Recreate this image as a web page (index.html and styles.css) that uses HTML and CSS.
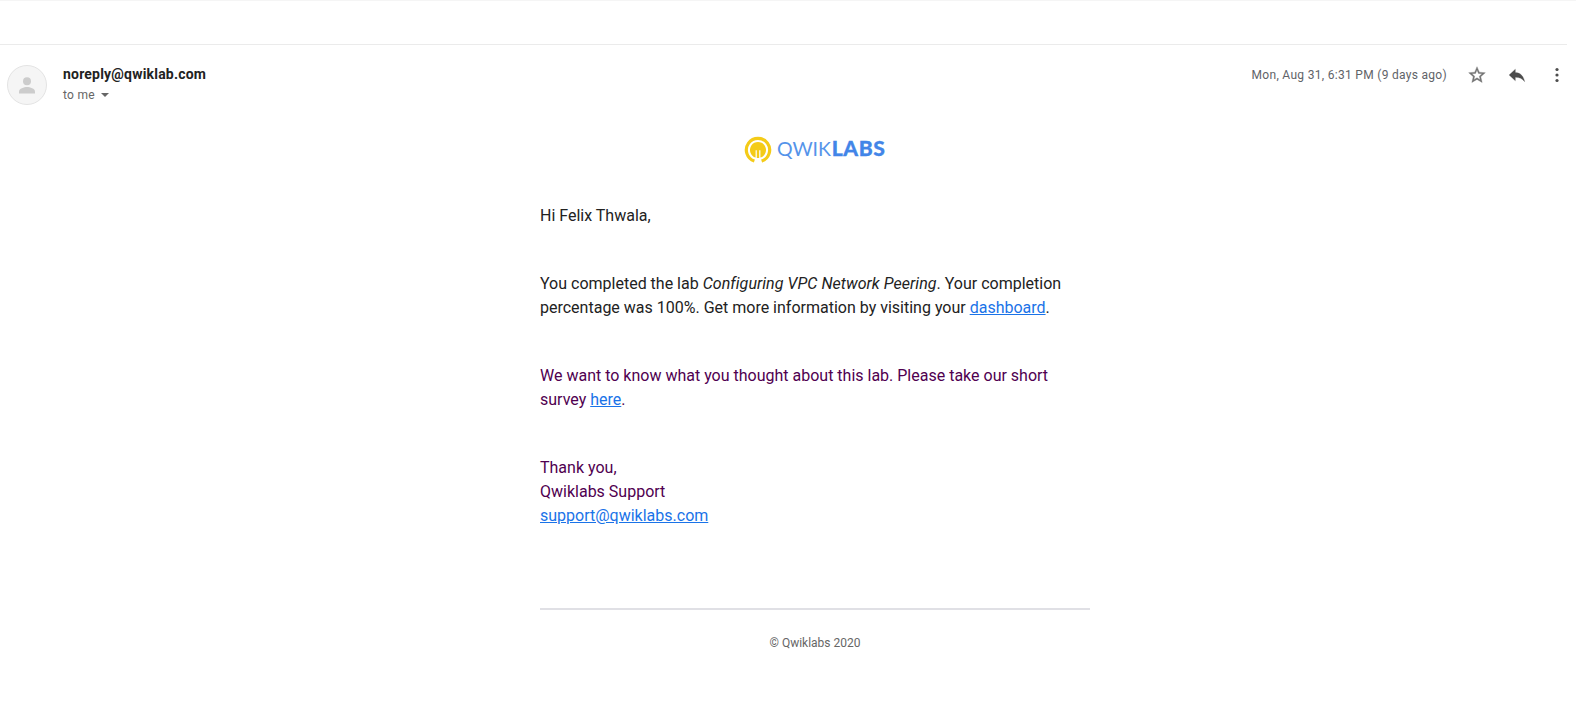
FILE: index.html
```html
<!DOCTYPE html>
<html lang="en">
<head>
<meta charset="utf-8">
<title>Qwiklabs message</title>
<link rel="stylesheet" href="styles.css">
</head>
<body>
<div class="toolbar"></div>
<header class="message-header">
  <div class="avatar">
    <svg width="40" height="40" viewBox="0 0 40 40"><circle cx="20" cy="20" r="19.5" fill="#f5f5f5" stroke="#e3e3e3"/><circle cx="20" cy="16.3" r="4" fill="#ccc"/><path d="M12 28.500v-2c0-3 5-4.600 8-4.600s8 1.600 8 4.600v2z" fill="#ccc"/></svg>
  </div>
  <div class="sender">
    <div class="sender-name">noreply@qwiklab.com</div>
    <div class="recipient"><span>to me</span><i class="caret"></i></div>
  </div>
  <div class="actions">
    <span class="date">Mon, Aug 31, 6:31 PM (9 days ago)</span>
    <svg class="icon star" viewBox="0 0 24 24"><path fill="#747474" stroke="#747474" stroke-width=".4" d="M22 9.240l-7.190-.620L12 2 9.190 8.630 2 9.240l5.460 4.730L5.820 21 12 17.270 18.180 21l-1.630-7.030L22 9.240zM12 15.400l-3.760 2.270 1-4.280-3.320-2.880 4.380-.380L12 6.100l1.710 4.040 4.380.380-3.320 2.880 1 4.280L12 15.400z"/></svg>
    <svg class="icon reply" viewBox="0 0 24 24"><path fill="#4d4d4d" stroke="#4d4d4d" stroke-width=".3" d="M10 9V5l-7.500 7 7.500 7v-4.300c5 0 8.400 1.700 11.200 5.300-1-5.200-4.200-11-11.200-11z"/></svg>
    <svg class="icon more" viewBox="0 0 20 20"><g fill="#4d4d4d"><circle cx="10" cy="4.500" r="1.600"/><circle cx="10" cy="10" r="1.600"/><circle cx="10" cy="15.500" r="1.600"/></g></svg>
  </div>
</header>
<main class="message">
  <svg class="logo" width="142" height="28" viewBox="0 0 142 28">
    <path d="M10.400 25.100A11.650 11.650 0 1 1 17.600 25.100" fill="none" stroke="#f4cb18" stroke-width="3.200"/>
    <path d="M11.600 21.600A8 8 0 1 1 16.400 21.600V14.300h-1.200V22h-2.400V14.300h-1.200z" fill="#f4cb18"/>
    <text class="logo-thin" x="33" y="20.200" textLength="54" lengthAdjust="spacingAndGlyphs">QWIK</text>
    <text class="logo-bold" x="87.800" y="20.200" textLength="53.500" lengthAdjust="spacingAndGlyphs">LABS</text>
  </svg>
  <p>Hi Felix Thwala,</p>
  <p>You completed the lab <em>Configuring VPC Network Peering</em>. Your completion<br>percentage was 100%. Get more information by visiting your <a>dashboard</a>.</p>
  <p class="quoted">We want to know what you thought about this lab. Please take our short<br>survey <a>here</a>.</p>
  <p class="quoted">Thank you,<br>Qwiklabs Support<br><a>support@qwiklabs.com</a></p>
  <footer class="copyright">© Qwiklabs 2020</footer>
</main>
</body>
</html>
```
FILE: styles.css
```css
* { box-sizing: border-box; }
body {
  margin: 0;
  height: 704px;
  overflow: hidden;
  background: #fff;
  color: #222;
  font-family: Roboto, "Liberation Sans", sans-serif;
}
.toolbar {
  height: 45px;
  margin-right: 9px;
  border-bottom: 1px solid #ebebeb;
  box-shadow: inset 0 1px #f5f5f5, 9px -44px 0 0 #f5f5f5;
  background: #fff;
}
.message-header {
  display: flex;
  height: 91px;
  padding: 20px 9px 0 7px;
}
.avatar { width: 40px; height: 40px; }
.sender { margin-left: 16px; }
.sender-name {
  height: 20px;
  font-size: 14px;
  font-weight: 700;
  line-height: 18px;
  letter-spacing: 0.2px;
}
.recipient {
  display: flex;
  align-items: center;
  font-size: 12px;
  line-height: 20px;
  letter-spacing: 0.3px;
  color: #666;
}
.caret {
  margin-left: 6px;
  border: 4px solid transparent;
  border-top-color: #666;
  border-bottom: 0;
}
.actions {
  display: flex;
  align-items: center;
  height: 20px;
  margin-left: auto;
}
.date {
  font-size: 12px;
  letter-spacing: 0.3px;
  color: #5f6368;
}
.icon { width: 20px; height: 20px; }
.star, .reply, .more { margin-left: 20px; }
.message {
  width: 550px;
  margin-left: 540px;
}
.logo {
  display: block;
  margin: 0 auto 40px;
}
.logo text {
  font-family: Lato, sans-serif;
  font-size: 19.5px;
  fill: #4285e8;
}
.logo .logo-thin { fill: #5594ea; }
.logo .logo-bold {
  font-size: 20px;
  font-weight: 900;
  letter-spacing: 0.5px;
  stroke: #4285e8;
  stroke-width: 0.3px;
}
.message p {
  margin: 0 0 44px;
  font-size: 16px;
  line-height: 24px;
  white-space: nowrap;
}
.message em { letter-spacing: 0.05px; }
.message .quoted { color: #500050; }
.message a {
  color: #1a73e8;
  text-decoration: underline;
}
.copyright {
  margin-top: 80px;
  padding-top: 24px;
  border-top: 2px solid #e0e0e5;
  font-size: 12px;
  line-height: 18px;
  text-align: center;
  color: #666;
}
```
